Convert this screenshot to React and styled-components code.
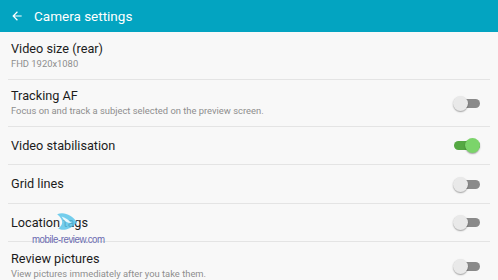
import styled, { createGlobalStyle } from "styled-components";

const GlobalStyle = createGlobalStyle`
  html, body {
    margin: 0;
    padding: 0;
    background: #f8f8f8;
  }
  body {
    font-family: Roboto, "Noto Sans", sans-serif;
    width: 498px;
    height: 280px;
    overflow: hidden;
  }
`;

const Screen = styled.div`
  position: relative;
  width: 498px;
  height: 280px;
  background: #f8f8f8;
  overflow: hidden;
`;

const Header = styled.header`
  height: 32px;
  background: #03a4c1;
  display: flex;
  align-items: center;
  padding-left: 10px;
  gap: 10px;
  color: #ffffff;
`;

const HeaderTitle = styled.h1`
  margin: 0;
  font-size: 13.5px;
  font-weight: 400;
`;

const List = styled.ul`
  list-style: none;
  margin: 0;
  padding: 0;
`;

const Row = styled.li`
  height: ${({ $h }) => $h}px;
  margin: 0 8px;
  padding: 0 3px;
  display: flex;
  align-items: center;
  justify-content: space-between;
  border-bottom: ${({ $last }) => ($last ? "none" : "1px solid #e4e4e4")};
`;

const Texts = styled.div`
  display: flex;
  flex-direction: column;
`;

const Title = styled.span`
  font-size: 12.7px;
  line-height: 16px;
  color: #1c1c1c;
`;

const Sub = styled.span`
  font-size: 9.4px;
  line-height: 14px;
  color: #8e8e8e;
`;

const Track = styled.span`
  position: relative;
  width: 26px;
  height: 9px;
  margin-right: 7px;
  border-radius: 5px;
  background: ${({ $on }) => ($on ? "#55a843" : "#8a8a8a")};
`;

const Thumb = styled.span`
  position: absolute;
  top: -3px;
  left: ${({ $on }) => ($on ? "11px" : "-1px")};
  width: 15px;
  height: 15px;
  border-radius: 50%;
  background: ${({ $on }) => ($on ? "#7bd46a" : "#e9e9e9")};
  box-shadow: 0 1px 1.5px rgba(0, 0, 0, 0.35);
`;

const Watermark = styled.div`
  position: absolute;
  left: 30px;
  top: 210px;
  width: 90px;
  height: 40px;
  pointer-events: none;
`;

const WatermarkText = styled.span`
  position: absolute;
  left: 2px;
  top: 23px;
  white-space: nowrap;
  font-family: "Liberation Sans", sans-serif;
  font-size: 11px;
  letter-spacing: -0.5px;
  transform: scaleX(0.88);
  transform-origin: left;
  color: #6a6ab0;
`;

const Logo = styled.svg`
  position: absolute;
  left: 25px;
  top: 1px;
`;

const Switch = ({ on }) => (
  <Track $on={on}>
    <Thumb $on={on} />
  </Track>
);

const BackArrow = () => (
  <svg width="14" height="14" viewBox="0 0 24 24">
    <path
      d="M20 11H7.83l5.59-5.59L12 4l-8 8 8 8 1.41-1.41L7.83 13H20v-2z"
      fill="#ffffff"
    />
  </svg>
);

const items = [
  { title: "Video size (rear)", sub: "FHD 1920x1080", h: 47 },
  {
    title: "Tracking AF",
    sub: "Focus on and track a subject selected on the preview screen.",
    h: 46,
    toggle: false,
  },
  { title: "Video stabilisation", h: 37, toggle: true },
  { title: "Grid lines", h: 38, toggle: false },
  { title: "Location tags", h: 37, toggle: false },
  {
    title: "Review pictures",
    sub: "View pictures immediately after you take them.",
    h: 48,
    toggle: false,
  },
];

export default function App() {
  return (
    <Screen>
      <GlobalStyle />
      <Header>
        <BackArrow />
        <HeaderTitle>Camera settings</HeaderTitle>
      </Header>
      <List>
        {items.map((it, i) => (
          <Row key={it.title} $h={it.h} $last={i === items.length - 1}>
            <Texts>
              <Title>{it.title}</Title>
              {it.sub && <Sub>{it.sub}</Sub>}
            </Texts>
            {it.toggle !== undefined && <Switch on={it.toggle} />}
          </Row>
        ))}
      </List>
      <Watermark>
        <Logo width="24" height="22" viewBox="0 0 22 20">
          <path
            d="M2 3 C8 0 16 4 20 10 C16 16 8 19 3 16 C7 13 9 9 2 3 Z"
            fill="#5cc6ea"
            opacity="0.85"
          />
          <path d="M6 5 C10 6 13 9 15 11 C11 11 8 9 6 5 Z" fill="#eaf8fd" />
        </Logo>
        <WatermarkText>mobile-review.com</WatermarkText>
      </Watermark>
    </Screen>
  );
}
